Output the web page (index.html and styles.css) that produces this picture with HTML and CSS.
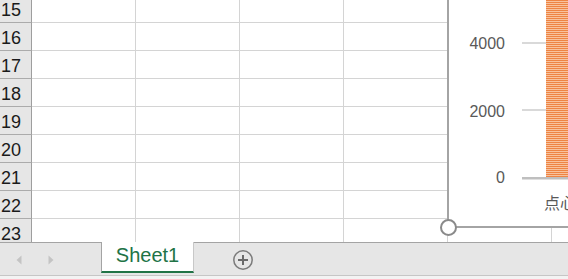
FILE: index.html
```html
<!DOCTYPE html>
<html>
<head>
<meta charset="utf-8">
<link rel="stylesheet" href="styles.css">
</head>
<body>
<div class="sheet">
  <div class="grid">
    <div class="row"><div class="rh">15</div><div class="c"></div><div class="c"></div><div class="c"></div><div class="c"></div><div class="c"></div><div class="c"></div></div>
    <div class="row"><div class="rh">16</div><div class="c"></div><div class="c"></div><div class="c"></div><div class="c"></div><div class="c"></div><div class="c"></div></div>
    <div class="row"><div class="rh">17</div><div class="c"></div><div class="c"></div><div class="c"></div><div class="c"></div><div class="c"></div><div class="c"></div></div>
    <div class="row"><div class="rh">18</div><div class="c"></div><div class="c"></div><div class="c"></div><div class="c"></div><div class="c"></div><div class="c"></div></div>
    <div class="row"><div class="rh">19</div><div class="c"></div><div class="c"></div><div class="c"></div><div class="c"></div><div class="c"></div><div class="c"></div></div>
    <div class="row"><div class="rh">20</div><div class="c"></div><div class="c"></div><div class="c"></div><div class="c"></div><div class="c"></div><div class="c"></div></div>
    <div class="row"><div class="rh">21</div><div class="c"></div><div class="c"></div><div class="c"></div><div class="c"></div><div class="c"></div><div class="c"></div></div>
    <div class="row"><div class="rh">22</div><div class="c"></div><div class="c"></div><div class="c"></div><div class="c"></div><div class="c"></div><div class="c"></div></div>
    <div class="row"><div class="rh">23</div><div class="c"></div><div class="c"></div><div class="c"></div><div class="c"></div><div class="c"></div><div class="c"></div></div>
  </div>
  <div class="chart">
    <svg class="plot" width="138" height="246" viewBox="449 -20 138 246">
      <defs>
        <pattern id="stripes" x="0" y="0" width="4" height="2" patternUnits="userSpaceOnUse">
          <rect x="0" y="0" width="4" height="1" fill="#ee8444"/>
          <rect x="0" y="1" width="4" height="1" fill="#f8c29c"/>
        </pattern>
      </defs>
      <rect x="522" y="42" width="80" height="2" fill="#d9d9d9"/>
      <rect x="522" y="109" width="80" height="2" fill="#d9d9d9"/>
      <rect x="546" y="-20" width="60" height="197" fill="url(#stripes)"/>
      <rect x="522" y="177" width="80" height="2.5" fill="#bfbfbf"/>
      <text class="ax" x="505" y="48.7" text-anchor="end">4000</text>
      <text class="ax" x="505" y="116.7" text-anchor="end">2000</text>
      <text class="ax" x="505" y="183" text-anchor="end">0</text>
      <text class="cat" x="544" y="208.5">点心</text>
    </svg>
  </div>
  <div class="handle"></div>
</div>
<div class="tabbar">
  <div class="nav">
    <span class="arrow"><svg width="6" height="10" viewBox="0 0 6 10"><path d="M5.5 0.5 L0.5 5 L5.5 9.5 Z" fill="#c4c4c4"/></svg></span>
    <span class="arrow"><svg width="6" height="10" viewBox="0 0 6 10"><path d="M0.5 0.5 L5.5 5 L0.5 9.5 Z" fill="#c4c4c4"/></svg></span>
  </div>
  <div class="tab">Sheet1</div>
  <div class="add"><svg width="20" height="20" viewBox="0 0 20 20"><circle cx="10" cy="10" r="9.2" fill="none" stroke="#7b7b7b" stroke-width="1.5"/><path d="M10 5 V15 M5 10 H15" stroke="#6a6a6a" stroke-width="2"/></svg></div>
</div>
<div class="status"></div>
</body>
</html>
```
FILE: styles.css
```css
html, body {
  margin: 0;
  padding: 0;
}
body {
  width: 568px;
  height: 279px;
  overflow: hidden;
  background: #ffffff;
  font-family: "Liberation Sans", Arial, sans-serif;
}
.sheet {
  position: relative;
  height: 242px;
  overflow: hidden;
}
.grid {
  margin-top: -5px;
}
.row {
  display: flex;
  height: 28px;
}
.rh {
  flex: none;
  width: 32px;
  height: 28px;
  box-sizing: border-box;
  background: #e6e6e6;
  border-right: 1px solid #9e9e9e;
  border-bottom: 1px solid #ababab;
  padding-top: 4px;
  padding-right: 10px;
  text-align: right;
  font-size: 18px;
  line-height: 23px;
  color: #1a1a1a;
  white-space: nowrap;
  direction: rtl;
}
.c {
  flex: none;
  width: 104px;
  height: 28px;
  box-sizing: border-box;
  border-right: 1px solid #d4d4d4;
  border-bottom: 1px solid #d4d4d4;
}
.chart {
  position: absolute;
  left: 447px;
  top: -20px;
  width: 140px;
  height: 248px;
  box-sizing: border-box;
  background: #ffffff;
  border-left: 2px solid #a4a4a4;
  border-bottom: 2px solid #a4a4a4;
}
.plot {
  display: block;
}
.ax {
  font-family: "Liberation Sans", Arial, sans-serif;
  font-size: 16px;
  fill: #595959;
}
.cat {
  font-family: "Noto Sans CJK SC", sans-serif;
  font-size: 16px;
  fill: #595959;
}
.handle {
  position: absolute;
  left: 439.5px;
  top: 218.5px;
  width: 17px;
  height: 17px;
  box-sizing: border-box;
  border: 2.5px solid #8a8a8a;
  border-radius: 50%;
  background: #ffffff;
}
.tabbar {
  display: flex;
  align-items: flex-start;
  height: 33px;
  box-sizing: border-box;
  background: #e6e6e6;
  border-top: 1px solid #a4a4a4;
}
.nav {
  flex: none;
  width: 101px;
  display: flex;
  padding-left: 3px;
  box-sizing: border-box;
}
.arrow {
  width: 32px;
  height: 10px;
  margin-top: 12px;
  display: flex;
  justify-content: center;
}
.arrow svg {
  display: block;
}
.tab {
  flex: none;
  width: 93px;
  height: 31px;
  margin-top: -1px;
  box-sizing: border-box;
  background: #ffffff;
  border-left: 1px solid #a4a4a4;
  border-right: 1px solid #c8c8c8;
  border-bottom: 2px solid #217346;
  text-align: center;
  font-size: 20px;
  line-height: 27px;
  color: #217346;
}
.add {
  flex: none;
  width: 20px;
  height: 20px;
  margin-left: 39px;
  margin-top: 7px;
}
.add svg {
  display: block;
}
.status {
  height: 4px;
  box-sizing: border-box;
  border-top: 1px solid #c6c6c6;
  background: #f3f3f3;
}
```
